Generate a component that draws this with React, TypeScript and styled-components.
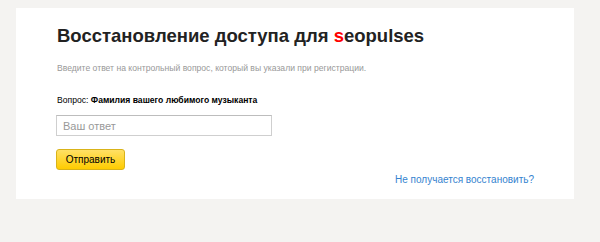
import React from "react";
import styled, { createGlobalStyle } from "styled-components";

const Global = createGlobalStyle`
  html, body { margin: 0; padding: 0; background: #f4f3f1; }
  body { font-family: "Liberation Sans", Arial, sans-serif; }
  * { box-sizing: border-box; }
`;

const Page = styled.div`
  width: 600px;
  height: 242px;
  padding: 8px 26px 0 16px;
`;

const Card = styled.div`
  background: #fff;
  height: 191px;
  padding: 17px 40px 0 40px;
  display: flex;
  flex-direction: column;
`;

const Title = styled.h1`
  margin: 0 0 0 1px;
  font-size: 18.5px;
  line-height: 22px;
  font-weight: bold;
  color: #222;
`;

const Red = styled.span`
  color: #f00;
`;

const Hint = styled.p`
  margin: 16px 0 0 1px;
  font-size: 8.6px;
  line-height: 11px;
  color: #999;
`;

const Question = styled.p`
  margin: 21px 0 0 1px;
  font-size: 8.6px;
  line-height: 11px;
  color: #000;
  b { font-weight: bold; }
`;

const Input = styled.input`
  margin-top: 9px;
  width: 216px;
  height: 21px;
  border: 1px solid #cfcfcf;
  border-top-color: #bdbdbd;
  padding: 0 6px;
  font-family: inherit;
  font-size: 11px;
  color: #000;
  outline: none;
  &::placeholder { color: #999; }
`;

const Button = styled.button`
  margin-top: 13px;
  width: 69px;
  height: 21px;
  align-self: flex-start;
  border: 1px solid #d9b319;
  border-radius: 3px;
  background: linear-gradient(#ffe066, #ffcc00);
  font-family: inherit;
  font-size: 10px;
  color: #000;
  padding: 0;
  cursor: pointer;
`;

const LinkRow = styled.div`
  margin-top: 4px;
  display: flex;
  justify-content: flex-end;
`;

const Link = styled.a`
  font-size: 10px;
  line-height: 12px;
  color: #3583cf;
  text-decoration: none;
`;

export default function App() {
  return (
    <>
      <Global />
      <Page>
        <Card>
          <Title>
            Восстановление доступа для <Red>s</Red>eopulses
          </Title>
          <Hint>
            Введите ответ на контрольный вопрос, который вы указали при регистрации.
          </Hint>
          <Question>
            Вопрос: <b>Фамилия вашего любимого музыканта</b>
          </Question>
          <Input placeholder="Ваш ответ" />
          <Button>Отправить</Button>
          <LinkRow>
            <Link href="#">Не получается восстановить?</Link>
          </LinkRow>
        </Card>
      </Page>
    </>
  );
}
